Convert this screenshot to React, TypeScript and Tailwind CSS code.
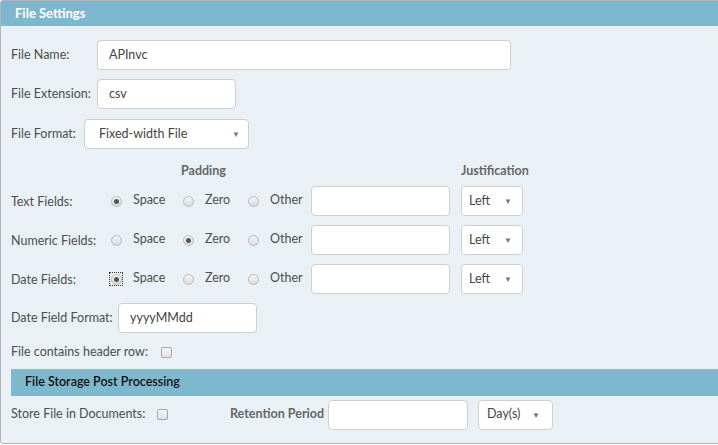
import React from "react";

const font = { fontFamily: "Lato, 'Open Sans', sans-serif" };

function Radio({ checked, focus }: { checked?: boolean; focus?: boolean }) {
  return (
    <span className={`flex h-[12px] w-[12px] shrink-0 items-center justify-center ${focus ? "outline outline-1 outline-dotted outline-[#333]" : ""}`}>
      <span className="flex h-[11px] w-[11px] items-center justify-center rounded-full border border-[#b9b9b9] bg-gradient-to-b from-[#f4f4f4] to-[#dcdcdc]">
        {checked && <span className="h-[5px] w-[5px] rounded-full bg-[#555]" />}
      </span>
    </span>
  );
}

function Checkbox() {
  return <span className="inline-block h-[11px] w-[11px] shrink-0 rounded-[2px] border border-[#a8a8a8] bg-gradient-to-b from-[#f6f6f6] to-[#e2e2e2]" />;
}

function Select({ value, className }: { value: string; className: string }) {
  return (
    <div className={`flex h-[30px] shrink-0 items-center justify-between rounded-[4px] border border-[#cfcfcf] bg-white text-[12.5px] text-[#444] ${className}`}>
      <span>{value}</span>
      <span className="text-[8px] text-[#777]">▼</span>
    </div>
  );
}

function Input({ value, className }: { value?: string; className: string }) {
  return (
    <div className={`flex h-[30px] shrink-0 items-center rounded-[4px] border border-[#cfcfcf] bg-white text-[12.5px] text-[#444] ${className}`}>
      {value}
    </div>
  );
}

function PaddingRow({ label, sel, focus }: { label: string; sel: number; focus?: boolean }) {
  const opts = ["Space", "Zero", "Other"];
  const widths = ["w-[72px]", "w-[65px]", "w-[64px]"];
  return (
    <div className="flex h-[30px] items-center">
      <span className="w-[99px] shrink-0 pt-[2px] text-[#4d4d4d]">{label}</span>
      {opts.map((o, i) => (
        <div key={o} className={`flex shrink-0 items-center gap-[11px] ${widths[i]}`}>
          <Radio checked={sel === i} focus={focus && sel === i} />
          <span className="-mt-[2px] text-[#4d4d4d]">{o}</span>
        </div>
      ))}
      <Input className="w-[139px]" />
      <Select value="Left" className="ml-[11px] w-[62px] pl-[7px] pr-[10px]" />
    </div>
  );
}

export default function App() {
  return (
    <div className="h-[445px] w-[718px] overflow-hidden bg-white" style={font}>
      <div className="h-[444px] w-[730px] rounded-[3px] border border-[#b5b5b5] bg-[#e9f1f7]">
        <div className="flex h-[25px] items-center bg-[#7eb8cf] pl-[14px] text-[13px] font-bold text-white">File Settings</div>
        <div className="flex flex-col pl-[10px] text-[12.5px]">
          <div className="mt-[14px] flex items-center">
            <span className="w-[86px] shrink-0 text-[#4d4d4d]">File Name:</span>
            <Input value="APInvc" className="w-[414px] pl-[11px]" />
          </div>
          <div className="mt-[9px] flex items-center">
            <span className="w-[86px] shrink-0 text-[#4d4d4d]">File Extension:</span>
            <Input value="csv" className="w-[139px] pl-[11px]" />
          </div>
          <div className="mt-[10px] flex items-center">
            <span className="w-[73px] shrink-0 text-[#4d4d4d]">File Format:</span>
            <Select value="Fixed-width File" className="w-[165px] pl-[14px] pr-[8px]" />
          </div>
          <div className="mt-[12px] flex h-[20px] items-center font-bold text-[#666]">
            <span className="ml-[170px] w-[280px] shrink-0">Padding</span>
            <span>Justification</span>
          </div>
          <div className="mt-[5px] flex flex-col gap-[9px]">
            <PaddingRow label="Text Fields:" sel={0} />
            <PaddingRow label="Numeric Fields:" sel={1} />
            <PaddingRow label="Date Fields:" sel={0} focus />
          </div>
          <div className="mt-[9px] flex items-center">
            <span className="w-[107px] shrink-0 text-[#4d4d4d]">Date Field Format:</span>
            <Input value="yyyyMMdd" className="w-[139px] pl-[11px]" />
          </div>
          <div className="mt-[10px] flex items-center">
            <span className="w-[150px] shrink-0 text-[#4d4d4d]">File contains header row:</span>
            <Checkbox />
          </div>
        </div>
        <div className="ml-[10px] mt-[7px] flex h-[27px] items-center border-t border-[#b0b0b0] bg-[#7eb8cf] pl-[14px] text-[12.5px] font-semibold text-[#111]">
          File Storage Post Processing
        </div>
        <div className="mt-[4px] flex items-center pl-[10px] text-[12.5px]">
          <span className="w-[146px] shrink-0 text-[#4d4d4d]">Store File in Documents:</span>
          <Checkbox />
          <span className="ml-[62px] w-[98px] shrink-0 font-bold text-[#666]">Retention Period</span>
          <Input className="w-[140px]" />
          <Select value="Day(s)" className="ml-[10px] w-[75px] pl-[8px] pr-[12px]" />
        </div>
      </div>
    </div>
  );
}
